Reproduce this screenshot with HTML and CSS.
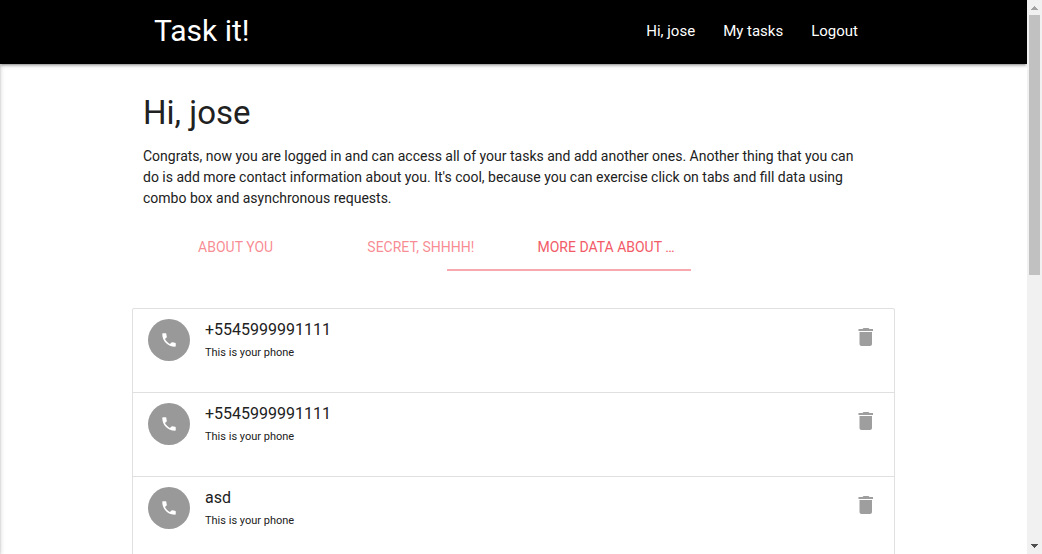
FILE: index.html
```html
<!DOCTYPE html>
<html lang="en">
<head>
<meta charset="utf-8">
<title>Task it!</title>
<link rel="stylesheet" href="styles.css">
</head>
<body>
<svg class="sprite" aria-hidden="true">
  <symbol id="phone" viewBox="0 0 24 24"><path d="M6.62 10.79c1.44 2.83 3.76 5.14 6.59 6.59l2.2-2.2c.27-.27.67-.36 1.02-.24 1.12.37 2.33.57 3.57.57.55 0 1 .45 1 1V20c0 .55-.45 1-1 1-9.39 0-17-7.61-17-17 0-.55.45-1 1-1h3.5c.55 0 1 .45 1 1 0 1.25.2 2.45.57 3.57.11.35.03.74-.25 1.02l-2.2 2.2z"/></symbol>
  <symbol id="trash" viewBox="0 0 24 24"><path d="M5.500 19c0 1.1.9 2 2 2h8.500c1.1 0 2-.9 2-2V7H5.500v12zM19 4h-3.500l-1-1h-5l-1 1H4.500v2H19V4z"/></symbol>
</svg>
<div class="window">
  <div class="page">
    <div class="drawer"></div>
    <header class="navbar">
      <nav class="container nav-content">
        <a class="logo" href="#">Task it!</a>
        <ul class="nav-links">
          <li><a href="#">Hi, jose</a></li>
          <li><a href="#">My tasks</a></li>
          <li><a href="#">Logout</a></li>
        </ul>
      </nav>
    </header>
    <main class="container">
      <section class="intro">
        <h1>Hi, jose</h1>
        <p>Congrats, now you are logged in and can access all of your tasks and add another ones. Another thing that you can do is add more contact information about you. It's cool, because you can exercise click on tabs and fill data using combo box and asynchronous requests.</p>
        <div class="tabs">
          <a href="#about">About you</a>
          <a href="#secret">Secret, shhhh!</a>
          <a class="active" href="#more">More data about you</a>
          <span class="indicator"></span>
        </div>
      </section>
      <ul class="collection" id="more">
        <li>
          <span class="circle"><svg><use href="#phone"/></svg></span>
          <div class="details"><span class="title">+5545999991111</span><p>This is your phone</p></div>
          <button type="button" aria-label="Delete"><svg><use href="#trash"/></svg></button>
        </li>
        <li>
          <span class="circle"><svg><use href="#phone"/></svg></span>
          <div class="details"><span class="title">+5545999991111</span><p>This is your phone</p></div>
          <button type="button" aria-label="Delete"><svg><use href="#trash"/></svg></button>
        </li>
        <li>
          <span class="circle"><svg><use href="#phone"/></svg></span>
          <div class="details"><span class="title">asd</span><p>This is your phone</p></div>
          <button type="button" aria-label="Delete"><svg><use href="#trash"/></svg></button>
        </li>
      </ul>
    </main>
  </div>
  <div class="scrollbar" aria-hidden="true">
    <svg class="arrow up" viewBox="0 0 7 4" shape-rendering="crispEdges"><path d="M3 0h1v1h1v1h1v1h1v1H0V3h1V2h1V1h1z"/></svg>
    <div class="track"><div class="thumb"></div></div>
    <svg class="arrow down" viewBox="0 0 7 4" shape-rendering="crispEdges"><path d="M0 0h7v1H6v1H5v1H4v1H3V3H2V2H1V1H0z"/></svg>
  </div>
</div>
</body>
</html>
```
FILE: styles.css
```css
* { box-sizing: border-box; }

body {
  margin: 0;
  background: #fff;
  color: #212121;
  font: 14px/21px Roboto, sans-serif;
}

h1, p, ul { margin: 0; padding: 0; font-weight: 400; }
ul { list-style: none; }
a { color: inherit; text-decoration: none; }
.sprite { display: none; }

.window { display: flex; height: 100vh; }
.page { position: relative; flex: 1; min-width: 0; overflow: hidden; }
.container { width: 763px; max-width: 100%; margin: 0 auto; }

.drawer {
  position: absolute;
  top: 0;
  left: -20px;
  width: 20px;
  height: 100%;
  box-shadow: 0 2px 2px rgba(0, 0, 0, .14), 0 3px 1px -2px rgba(0, 0, 0, .12), 0 1px 5px rgba(0, 0, 0, .2);
}

.navbar {
  position: relative;
  background: #000;
  color: #fff;
  box-shadow: 0 2px 2px rgba(0, 0, 0, .14), 0 3px 1px -2px rgba(0, 0, 0, .12), 0 1px 5px rgba(0, 0, 0, .2);
}
.nav-content {
  display: flex;
  justify-content: space-between;
  padding: 0 22px 2px;
  line-height: 62px;
}
.logo { font-size: 30px; }
.nav-links { display: flex; gap: 28px; padding-right: 15px; font-size: 15px; }
.nav-links a { display: block; }

.intro { padding: 30px 11px 0; }
.intro p { padding-right: 16px; }
h1 { font-size: 33px; line-height: 38px; margin-bottom: 14px; }

.tabs {
  position: relative;
  display: grid;
  grid-template-columns: repeat(4, 1fr);
  margin-top: 14px;
  color: rgba(245, 88, 100, .7);
  line-height: 48px;
  text-align: center;
  text-transform: uppercase;
}
.tabs a {
  overflow: hidden;
  padding: 0 24px;
  text-overflow: ellipsis;
  white-space: nowrap;
}
.tabs .active { color: #f25b67; }
.indicator {
  position: absolute;
  bottom: 0;
  left: 41%;
  width: 33%;
  height: 2px;
  background: #f7a9af;
}

.collection {
  margin-top: 37px;
  border: 1px solid #e0e0e0;
  border-radius: 2px;
}
.collection li {
  display: flex;
  align-items: flex-start;
  min-height: 84px;
  padding: 10px 15px;
  border-bottom: 1px solid #e0e0e0;
}
.circle {
  display: grid;
  place-items: center;
  width: 42px;
  height: 42px;
  margin-right: 15px;
  border-radius: 50%;
  background: #999;
}
.circle svg { width: 18px; height: 18px; fill: #fff; }
.details { flex: 1; }
.title { display: block; font-size: 16px; }
.details p { font-size: 11px; line-height: 26px; }
.collection button {
  margin: 6px 1px 0 0;
  padding: 0;
  border: 0;
  background: none;
}
.collection button svg { display: block; width: 24px; height: 24px; fill: #9e9e9e; }

.scrollbar {
  display: flex;
  flex-direction: column;
  align-items: center;
  width: 15px;
  background: #f1f1f1;
}
.track { flex: 1; width: 11px; }
.thumb { height: 260px; background: #c1c1c1; }
.arrow { width: 7px; height: 4px; }
.up { margin: 6px 0 5px; fill: #a3a3a3; }
.down { margin: 5px 0 6px; fill: #505050; }
```
